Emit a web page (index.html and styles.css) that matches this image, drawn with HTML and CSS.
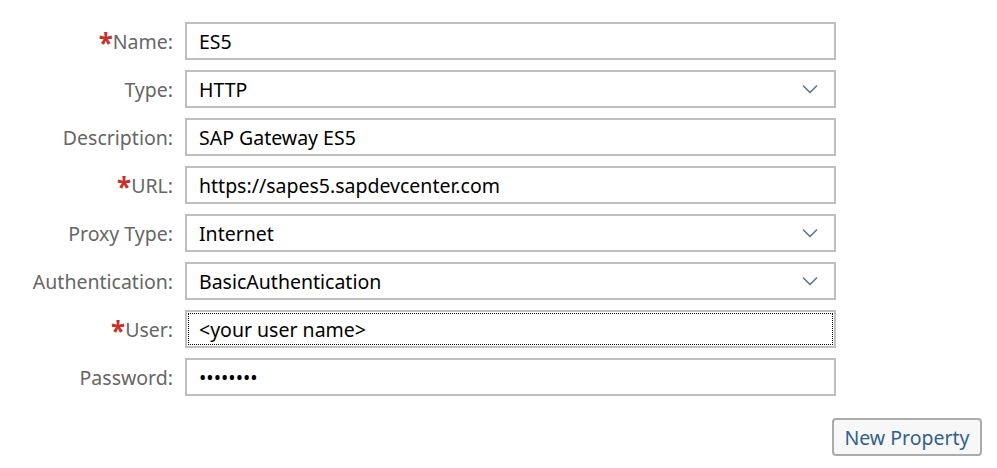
FILE: index.html
```html
<!DOCTYPE html>
<html>
<head>
<meta charset="utf-8">
<link rel="stylesheet" href="styles.css">
</head>
<body>
<div class="form">
  <label class="lbl"><span class="req">*</span>Name:</label>
  <div class="box">ES5</div>
  <label class="lbl">Type:</label>
  <div class="box select">HTTP<svg class="chev" width="16" height="10" viewBox="0 0 16 10"><path d="M1 1.5 L8 8.5 L15 1.5" fill="none" stroke="#4a6e94" stroke-width="1.4"/></svg></div>
  <label class="lbl">Description:</label>
  <div class="box">SAP Gateway ES5</div>
  <label class="lbl"><span class="req">*</span>URL:</label>
  <div class="box">https://sapes5.sapdevcenter.com</div>
  <label class="lbl">Proxy Type:</label>
  <div class="box select">Internet<svg class="chev" width="16" height="10" viewBox="0 0 16 10"><path d="M1 1.5 L8 8.5 L15 1.5" fill="none" stroke="#4a6e94" stroke-width="1.4"/></svg></div>
  <label class="lbl">Authentication:</label>
  <div class="box select">BasicAuthentication<svg class="chev" width="16" height="10" viewBox="0 0 16 10"><path d="M1 1.5 L8 8.5 L15 1.5" fill="none" stroke="#4a6e94" stroke-width="1.4"/></svg></div>
  <label class="lbl"><span class="req">*</span>User:</label>
  <div class="box focus">&lt;your user name&gt;</div>
  <label class="lbl">Password:</label>
  <div class="box pw">••••••••</div>
</div>
<div class="actions">
  <button class="btn">New Property</button>
</div>
</body>
</html>
```
FILE: styles.css
```css
html, body {
  margin: 0;
  padding: 0;
  background: #fff;
}
body {
  font-family: "Noto Sans", "Open Sans", sans-serif;
  font-size: 19.5px;
}
.form {
  display: grid;
  grid-template-columns: 173px 651px;
  column-gap: 12px;
  row-gap: 10px;
  padding-top: 22px;
}
.lbl {
  display: flex;
  align-items: center;
  justify-content: flex-end;
  color: #666;
  height: 38px;
}
.req {
  color: #c9302c;
  font-weight: bold;
  font-size: 26px;
  line-height: 18px;
  position: relative;
  top: 2px;
}
.box {
  box-sizing: border-box;
  height: 38px;
  border: 2px solid #bfbfbf;
  background: #fff;
  color: #000;
  padding-left: 12px;
  display: flex;
  align-items: center;
  position: relative;
}
.select {
  justify-content: space-between;
  padding-right: 16px;
}
.focus {
  outline: 1px dotted #000;
  outline-offset: -4px;
}
.pw {
  letter-spacing: 0;
}
.actions {
  display: flex;
  justify-content: flex-end;
  padding-right: 15px;
  margin-top: 22px;
}
.btn {
  box-sizing: border-box;
  height: 38px;
  width: 150px;
  border: 2px solid #ababab;
  border-radius: 4px;
  background: #f7f7f7;
  color: #346187;
  font-family: "Noto Sans", "Open Sans", sans-serif;
  font-size: 19.5px;
  padding: 0;
}
```
